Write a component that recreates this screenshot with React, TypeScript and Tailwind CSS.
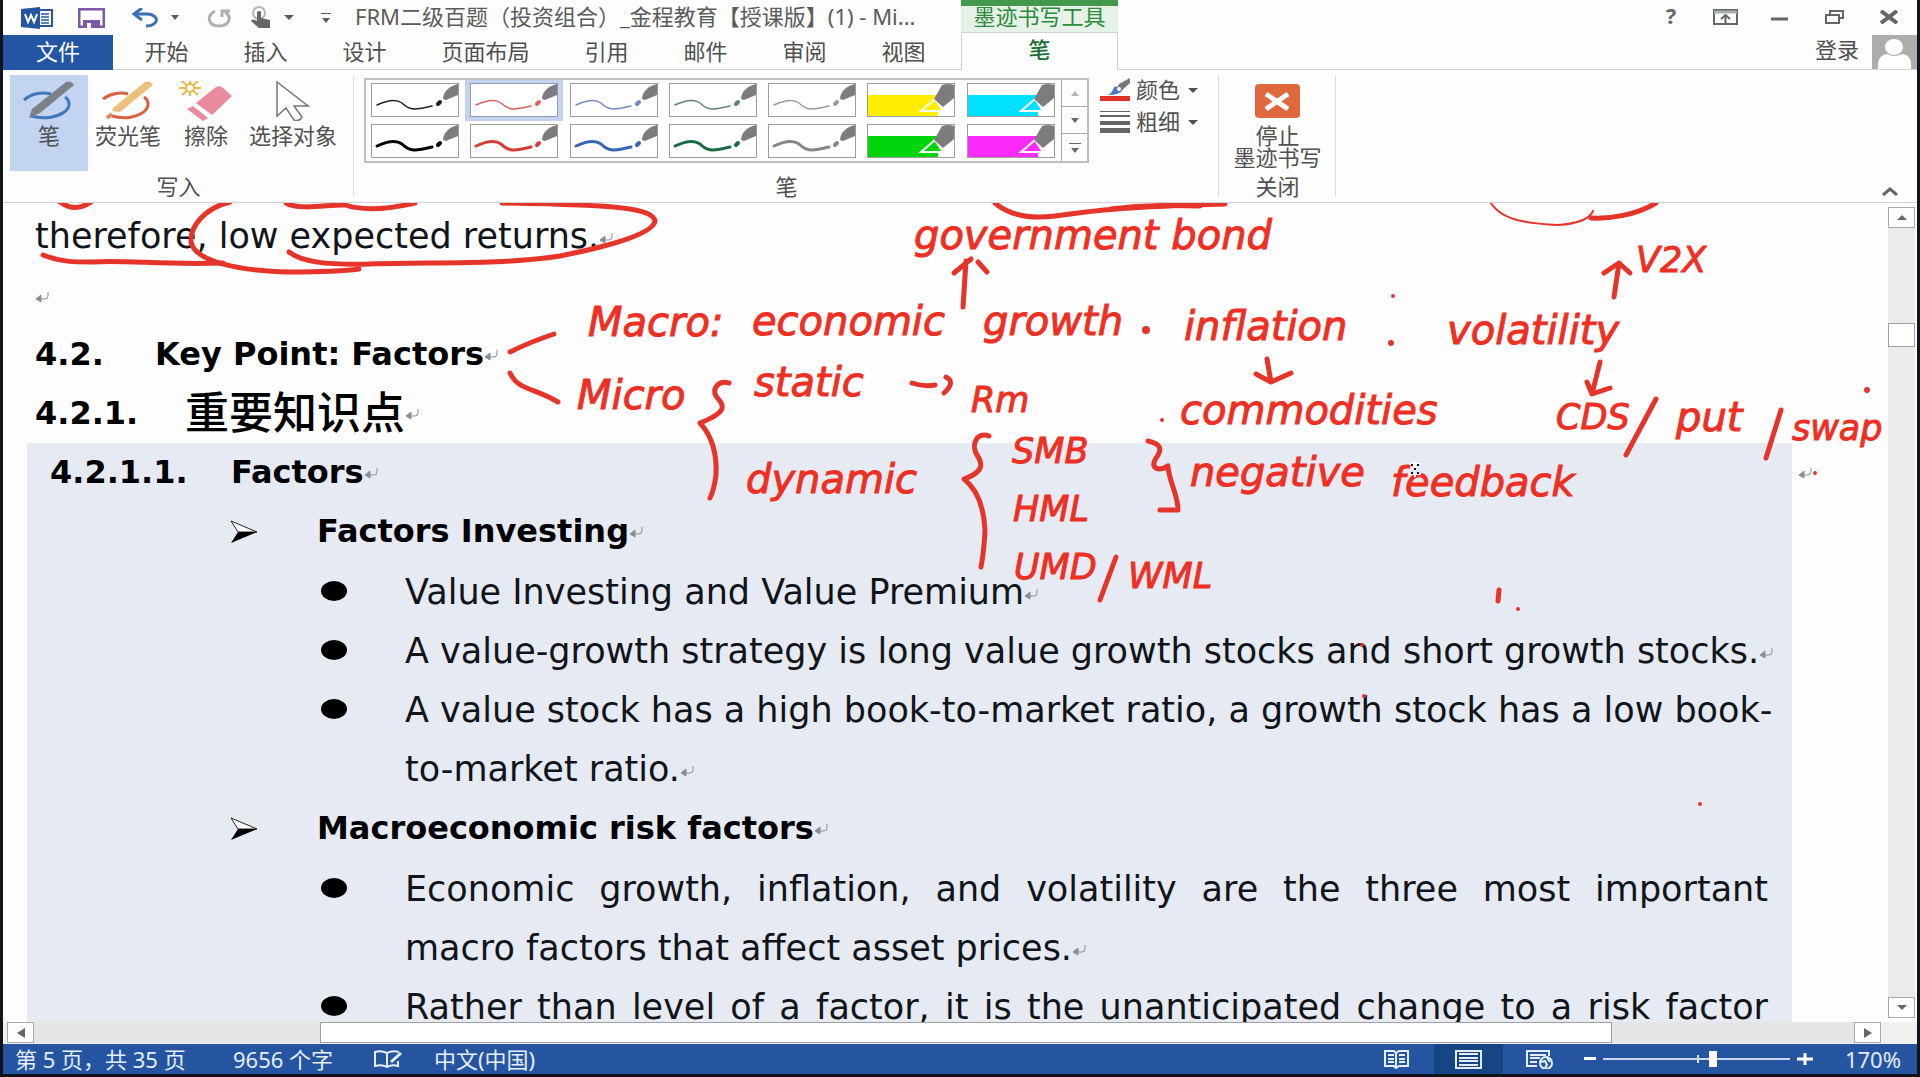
/* WordInk — Word window with the ink tools tab open over a study note */

import type { ReactNode } from 'react'

const TABS = [
  { label: '开始' }, { label: '插入' }, { label: '设计' }, { label: '页面布局', wide: true },
  { label: '引用' }, { label: '邮件' }, { label: '审阅' }, { label: '视图' },
]

interface Pen {
  name: string
  color: string
  width: number
  marker?: boolean
  active?: boolean
}

const PENS: Pen[] = [
  { name: '黑色细笔', color: '#222222', width: 1.5 },
  { name: '红色细笔', color: '#e0605c', width: 1.5, active: true },
  { name: '蓝色细笔', color: '#7388cc', width: 1.5 },
  { name: '绿色细笔', color: '#5a8573', width: 1.5 },
  { name: '灰色细笔', color: '#9a9a9a', width: 1.5 },
  { name: '黄色荧光笔', color: '#ffee00', width: 0, marker: true },
  { name: '青色荧光笔', color: '#00e0ff', width: 0, marker: true },
  { name: '黑色粗笔', color: '#000000', width: 3 },
  { name: '红色粗笔', color: '#d93a32', width: 3 },
  { name: '蓝色粗笔', color: '#3566b4', width: 3 },
  { name: '绿色粗笔', color: '#1d6b45', width: 3 },
  { name: '灰色粗笔', color: '#868686', width: 3 },
  { name: '绿色荧光笔', color: '#00d40a', width: 0, marker: true },
  { name: '洋红荧光笔', color: '#fb2bfb', width: 0, marker: true },
]

const SECTIONS = [
  {
    title: 'Factors Investing',
    items: [
      ['Value Investing and Value Premium'],
      ['A value-growth strategy is long value growth stocks and short growth stocks.'],
      ['A value stock has a high book-to-market ratio, a growth stock has a low book-', 'to-market ratio.'],
    ],
  },
  {
    title: 'Macroeconomic risk factors',
    items: [
      ['Economic growth, inflation, and volatility are the three most important', 'macro factors that affect asset prices.'],
      ['Rather than level of a factor, it is the unanticipated change to a risk factor', ''],
    ],
  },
]

// Handwritten notes: position of each word on the ink canvas
const NOTES = [
  { t: 'government bond', x: 914, y: 249 },
  { t: 'Macro:', x: 588, y: 336 },
  { t: 'economic', x: 752, y: 335 },
  { t: 'growth', x: 983, y: 335 },
  { t: 'inflation', x: 1184, y: 340 },
  { t: 'volatility', x: 1447, y: 344 },
  { t: 'Micro', x: 577, y: 409 },
  { t: 'static', x: 754, y: 396 },
  { t: 'commodities', x: 1180, y: 424 },
  { t: 'put', x: 1676, y: 431 },
  { t: 'dynamic', x: 746, y: 493 },
  { t: 'negative', x: 1190, y: 486 },
  { t: 'feedback', x: 1391, y: 496 },
]

const SHORT_NOTES = [
  { t: 'V2X', x: 1636, y: 272 },
  { t: 'Rm', x: 971, y: 412 },
  { t: 'CDS', x: 1556, y: 429 },
  { t: 'swap', x: 1792, y: 440 },
  { t: 'SMB', x: 1012, y: 463 },
  { t: 'HML', x: 1013, y: 521 },
  { t: 'UMD', x: 1014, y: 579 },
  { t: 'WML', x: 1128, y: 588 },
]

const STROKES = [
  'M230 202C205 208 190 226 191 242C195 262 240 271 290 272C320 272 345 271 359 269',
  'M43 255C60 262 75 262 92 262C130 260 160 265 223 263',
  'M289 252C302 262 325 265 370 264C440 262 500 265 560 256C610 246 653 234 655 221C652 208 620 205 502 203',
  'M60 202Q75 213 91 202',
  'M286 203C300 211 330 204 345 205C360 210 380 211 415 203',
  'M510 352Q530 342 554 334',
  'M510 373C518 390 532 387 558 402',
  'M995 203C1010 216 1030 219 1055 216C1085 212 1110 207 1225 204',
  'M1111 209Q1150 204 1200 206',
  'M963 307L966 261M954 273L971 259M978 262L987 272',
  'M729 383C718 380 712 389 716 396C722 404 732 410 700 423C712 436 717 455 716 475Q714 490 710 498',
  'M989 436C976 431 971 446 977 455C983 464 984 472 964 479C978 490 984 510 985 530Q984 552 981 567',
  'M1148 441C1162 444 1162 450 1156 458C1150 468 1158 472 1168 466C1169 482 1178 494 1178 510L1160 510',
  'M912 383Q924 387 935 385M946 377Q956 382 944 393',
  'M1116 557L1100 600',
  'M1591 218C1610 219 1636 215 1656 203',
  'M1614 297L1619 263M1604 273L1619 263L1630 273',
  'M1267 359L1271 382M1256 374L1271 382L1291 373',
  'M1600 362L1592 394M1587 382L1592 394L1610 388',
  'M1656 399L1626 455',
  'M1781 410L1766 458',
  'M1499 590L1498 601',
]

const DOTS = [
  [1162, 420, 2], [1146, 330, 4], [1393, 296, 2], [1391, 343, 3], [1867, 390, 3], [1815, 473, 2],
  [1518, 609, 2], [1362, 645, 2], [1364, 696, 2], [1700, 804, 2],
]

function Caret({ up, small }: { up?: boolean; small?: boolean }) {
  return (
    <svg width={small ? 8 : 10} height="5" viewBox="0 0 10 6" preserveAspectRatio="none" fill="currentColor" className="shrink-0">
      <path d={up ? 'M0 6L5 0L10 6Z' : 'M0 0L5 6L10 0Z'} />
    </svg>
  )
}

function Mark() {
  return (
    <svg width="14" height="12" viewBox="0 0 14 12" fill="none" stroke="#8a8f96" strokeWidth="1" className="inline-block">
      <path d="M13 1V5Q13 8 10 8H2" />
      <path d="M6 4L1 8L6 11Z" fill="#8a8f96" />
    </svg>
  )
}

function PenThumb({ pen }: { pen: Pen }) {
  if (pen.marker) {
    return (
      <svg width="86" height="32" viewBox="0 0 86 32">
        <rect y="11" width="70" height="21" fill={pen.color} />
        <path d="M53 27L67 15L75 27Z" fill={pen.color} stroke="#fff" strokeWidth="2" />
        <path d="M66 15L74 1Q80 -1 86 1V14L75 23Z" fill="#7c7c7c" />
      </svg>
    )
  }
  return (
    <svg width="86" height="32" viewBox="0 0 86 32" fill="none">
      <path d="M5 21Q22 13 30 19C38 27 44 26 60 22" stroke={pen.color} strokeWidth={pen.width} strokeLinecap="round" />
      <path d="M66 20L68 18" stroke={pen.color} strokeWidth="4" strokeLinecap="round" />
      <path d="M71 15C71 8 77 2 86 0V11L74 16Z" fill="#7c7c7c" />
    </svg>
  )
}

function TitleBar() {
  return (
    <div className="flex h-[35px] items-center pl-[18px] text-[#5b5b5b]">
      <svg width="32" height="22" viewBox="0 0 32 22">
        <rect x="17" y="3" width="14" height="16" fill="#fff" stroke="#2b579a" strokeWidth="2" />
        <path d="M20 7H28M20 10H28M20 13H28M20 16H28" stroke="#2b579a" strokeWidth="1.5" />
        <path d="M0 2L19 0V22L0 20Z" fill="#2355a3" />
        <path d="M4 7L7 15L10 8L13 15L16 7" fill="none" stroke="#fff" strokeWidth="2" />
      </svg>
      <button aria-label="保存" className="ml-[25px]">
        <svg width="27" height="20" viewBox="0 0 27 20">
          <path d="M1 1H26V19H1Z" fill="#fff" stroke="#7d57a8" strokeWidth="3" />
          <rect x="5" y="12" width="17" height="8" fill="#7d57a8" />
          <rect x="9" y="15" width="4" height="5" fill="#fff" />
        </svg>
      </button>
      <button aria-label="撤消" className="ml-[26px] flex items-center gap-3">
        <svg width="28" height="20" viewBox="0 0 28 20" fill="none" stroke="#3b6fb6" strokeWidth="3">
          <path d="M4 6H17C29 7 28 18 15 18" />
          <path d="M11 0L3 6L11 12" />
        </svg>
        <Caret small />
      </button>
      <button aria-label="重复" className="ml-[28px] text-[#b0b0b0]">
        <svg width="25" height="20" viewBox="0 0 25 20" fill="none" stroke="currentColor" strokeWidth="3">
          <path d="M8 3C-1 8 1 18 12 18C23 18 25 8 18 4" />
          <path d="M15 9V3H23" />
        </svg>
      </button>
      <button aria-label="触摸/鼠标模式" className="ml-[18px] flex items-center gap-3">
        <svg width="22" height="23" viewBox="0 0 22 23">
          <circle cx="9" cy="7" r="6" fill="none" stroke="#a9b6c8" strokeWidth="2" />
          <path d="M7 6Q9 4 11 6V12L20 14V22H9L1 15Q2 12 7 15Z" fill="#666" />
        </svg>
        <Caret />
      </button>
      <button aria-label="自定义快速访问工具栏" className="ml-[27px] flex flex-col items-center gap-1">
        <span className="h-px w-2.5 bg-current" />
        <Caret small />
      </button>
      <h1 className="ml-6 flex-1 truncate pb-0.5">
        FRM二级百题（投资组合）_金程教育【授课版】(1) - Mi...
      </h1>
    </div>
  )
}

function Header() {
  return (
    <header className="flex h-[70px] shrink-0 text-[22px] text-[#4f4f4f]">
      <div className="flex flex-col">
        <div className="grid"><TitleBar /></div>
        <nav className="flex h-[35px] border-b border-[#d2d2d2] pr-2">
          <button className="-mb-px mr-1 w-[110px] bg-[#2355a3] pb-1 text-white">文件</button>
          {TABS.map(t => (
            <button key={t.label} className={t.wide ? 'w-[143px] pb-1' : 'w-[99px] pb-1'}>{t.label}</button>
          ))}
        </nav>
      </div>
      <div className="flex w-[157px] flex-col text-center text-[#2c8a3c]">
        <div className="h-[35px] border-t-[6px] border-[#43984b] bg-[#e6f1e8] leading-5">墨迹书写工具</div>
        <button className="flex-1 border-x border-t border-[#d2d2d2] pb-1 font-medium text-[#1f6f35]">笔</button>
      </div>
      <div className="flex flex-1 flex-col items-end border-b border-[#d2d2d2]">
        <div className="flex h-[34px] items-center pr-[18px] text-[#666]">
          <button aria-label="帮助" className="w-5 pb-1 font-bold">?</button>
          <button aria-label="功能区显示选项" className="ml-8">
            <svg width="25" height="16" viewBox="0 0 25 16" fill="none" stroke="currentColor" strokeWidth="2">
              <rect x="1" y="1" width="23" height="14" /><path d="M1 3H24" stroke="#a8b0ae" strokeWidth="3" />
              <path d="M12.500 14V7M8 10L12.500 6L17 10" />
            </svg>
          </button>
          <button aria-label="最小化" className="ml-[33px]">
            <svg width="17" height="16" stroke="currentColor" strokeWidth="3"><path d="M0 10H17" /></svg>
          </button>
          <button aria-label="向下还原" className="ml-[37px]">
            <svg width="20" height="16" viewBox="0 0 20 16" fill="none" stroke="currentColor" strokeWidth="2">
              <rect x="1" y="6" width="13" height="8" /><path d="M5 5V2H18V9H15" />
            </svg>
          </button>
          <button aria-label="关闭" className="ml-[34px]">
            <svg width="20" height="14" viewBox="0 0 20 14" stroke="currentColor" strokeWidth="4"><path d="M2 1L18 13M18 1L2 13" /></svg>
          </button>
        </div>
        <a href="#login" className="flex h-[35px] items-center gap-[13px] whitespace-nowrap">
          <span className="pb-1">登录</span>
          <svg width="45" height="34" viewBox="0 0 45 34" className="bg-[#adadad]" fill="#fff">
            <ellipse cx="22" cy="12" rx="9" ry="8" /><path d="M6 34C5 24 9 20 15 19Q22 23 30 19C37 20 40 24 39 34Z" />
          </svg>
        </a>
      </div>
    </header>
  )
}

function Group({ label, className, children }: { label: string; className: string; children: ReactNode }) {
  return (
    <section className={`relative flex flex-col ${className}`}>
      <div className="flex h-[101px]">{children}</div>
      <h2 className="text-center leading-[30px]">{label}</h2>
      <div className="absolute right-0 top-1.5 h-[120px] w-px bg-[#dcdcdc]" />
    </section>
  )
}

function Ribbon() {
  return (
    <div className="flex h-[133px] shrink-0 border-b border-[#d2d2d2] text-[22px] text-[#505050]">
      <Group label="写入" className="w-[351px]">
        <div className="flex pl-[7px] pt-[5px]">
          <button className="flex h-24 w-[78px] flex-col items-center bg-[#c2d4f0] pt-1.5">
            <svg width="54" height="40" viewBox="0 0 54 40" fill="none">
              <path d="M2 19C10 12 20 11 29 13M43 16C56 26 36 42 9 35" stroke="#3f78bd" strokeWidth="3" />
              <path d="M10 28L44 1Q49 -1 52 4L18 32L7 37Z" fill="#7b8088" />
            </svg>
            <span className="leading-7">笔</span>
          </button>
          <button className="flex h-24 w-[80px] flex-col items-center whitespace-nowrap pt-1.5">
            <svg width="54" height="40" viewBox="0 0 54 40" fill="none">
              <path d="M2 18C10 12 20 11 27 13M43 16C56 26 36 42 11 35" stroke="#d8623f" strokeWidth="3" />
              <path d="M12 27L44 1Q49 -1 52 4L19 31L11 30Z" fill="#e9c07c" />
              <path d="M6 37L11 33" stroke="#e58a60" strokeWidth="4" />
            </svg>
            <span className="leading-7">荧光笔</span>
          </button>
          <button className="flex h-24 w-[76px] flex-col items-center pt-1.5">
            <svg width="54" height="40" viewBox="0 0 54 40">
              <path d="M11 -1V15M0 7H22M3 0L19 14M19 0L3 14" stroke="#eeb64f" strokeWidth="2" />
              <circle cx="11" cy="7" r="4" fill="#fff" stroke="#eeb64f" strokeWidth="2" />
              <path d="M17 22L37 6Q41 4 44 7L53 15L33 34Z" fill="#ea8a9e" />
              <path d="M14 25L29 37L24 40L8 28Z" fill="#ea8a9e" />
            </svg>
            <span className="leading-7">擦除</span>
          </button>
          <button className="flex h-24 w-[98px] flex-col items-center pt-1.5">
            <svg width="34" height="40" viewBox="0 0 34 40" fill="#fff" stroke="#777" strokeWidth="1.5">
              <path d="M1 1V35L10 27L18 39Q23 41 26 36L18 25H32Z" />
            </svg>
            <span className="whitespace-nowrap leading-7">选择对象</span>
          </button>
        </div>
      </Group>

      <Group label="笔" className="w-[865px]">
        <div className="ml-2.5 mt-2 flex h-[85px] border-2 border-[#bcbec2]">
          <div className="grid w-[695px] grid-cols-7">
            {PENS.map(p => (
              <button
                key={p.name}
                aria-label={p.name}
                className={p.active
                  ? 'flex w-[98px] items-center justify-center bg-[#c5d2ec]'
                  : 'flex w-[98px] items-center justify-center'}
              >
                <span className={p.active ? 'border border-[#8c9cc4] bg-white' : 'border border-[#9c9c9c] bg-white'}>
                  <PenThumb pen={p} />
                </span>
              </button>
            ))}
          </div>
          <div className="grid w-[26px] grid-rows-3 divide-y divide-[#a8a8a8] border-l border-[#a8a8a8] text-[#666]">
            <button aria-label="上一行" className="flex items-center justify-center text-[#b5b5b5]"><Caret up small /></button>
            <button aria-label="下一行" className="flex items-center justify-center"><Caret small /></button>
            <button aria-label="其他" className="flex flex-col items-center justify-center gap-1">
              <span className="h-px w-3 bg-current" /><Caret small />
            </button>
          </div>
        </div>
        <div className="ml-[11px] flex flex-col pt-1">
          <button className="flex h-8 items-center">
            <svg width="30" height="24" viewBox="0 0 30 24">
              <path d="M30 0L19 6L15 13L20 14L30 5Z" fill="#777" />
              <path d="M7 17Q12 16 14 9Q19 7 22 12Q21 17 7 17Z" fill="#4b79bd" />
              <circle cx="19" cy="11" r="2" fill="#fff" />
              <rect y="18" width="30" height="5" fill="#e2302b" />
            </svg>
            <span className="ml-1.5 mr-2 pb-0.5">颜色</span><Caret />
          </button>
          <button className="flex h-8 items-center">
            <svg width="30" height="24" viewBox="0 0 30 24" fill="#666">
              <rect y="1" width="30" height="1" /><rect y="5" width="30" height="2" />
              <rect y="11" width="30" height="4" /><rect y="18" width="30" height="5" />
            </svg>
            <span className="ml-1.5 mr-2 pb-0.5">粗细</span><Caret />
          </button>
        </div>
      </Group>

      <Group label="关闭" className="w-[117px]">
        <button className="flex w-full flex-col items-center whitespace-nowrap pt-3.5 leading-[22px]">
          <svg width="45" height="34" viewBox="0 0 45 34">
            <rect width="45" height="34" rx="4" fill="#e0683f" />
            <path d="M11 10L33 25M33 10L11 25" stroke="#fff" strokeWidth="5" />
          </svg>
          <span className="mt-1.5">停止</span>
          <span>墨迹书写</span>
        </button>
      </Group>

      <div className="flex flex-1 items-end justify-end pb-1.5 pr-[18px]">
        <button aria-label="折叠功能区">
          <svg width="18" height="10" viewBox="0 0 18 10" fill="none" stroke="#666" strokeWidth="3"><path d="M2 9L9 3L16 9" /></svg>
        </button>
      </div>
    </div>
  )
}

function InkLayer() {
  return (
    <svg className="pointer-events-none absolute left-0 top-0" width="1885" height="819" viewBox="3 203 1885 819" fill="none">
      <g stroke="#e5352b" strokeWidth="5" strokeLinecap="round" strokeLinejoin="round">
        {STROKES.map(d => <path key={d} d={d} />)}
        <path d="M1490 202C1500 217 1515 223 1558 225Q1588 223 1593 211" strokeWidth="2" />
      </g>
      <g fill="#e5352b">
        {DOTS.map(([x, y, r]) => <circle key={`${x}-${y}`} cx={x} cy={y} r={r} />)}
      </g>
      <g className="fill-[#ee3024] stroke-[#ee3024] font-['DejaVu_Sans',sans-serif] text-[40px] italic" strokeWidth="1">
        {NOTES.map(n => <text key={n.t} x={n.x} y={n.y}>{n.t}</text>)}
      </g>
      <g className="fill-[#ee3024] stroke-[#ee3024] font-['DejaVu_Sans',sans-serif] text-[35px] italic" strokeWidth="1">
        {SHORT_NOTES.map(n => <text key={n.t} x={n.x} y={n.y}>{n.t}</text>)}
      </g>
      {/* pen cursor */}
      <path d="M1409 464H1421M1409 474H1421M1415 461V477" stroke="#fff" strokeWidth="2" />
      <path d="M1411 465H1413M1417 465H1419M1411 473H1413M1417 473H1419M1414 469H1416" stroke="#111" strokeWidth="2" />
    </svg>
  )
}

function Page() {
  return (
    <main className="relative min-w-0 flex-1 overflow-hidden pt-1 font-['DejaVu_Sans','Noto_Sans_CJK_SC',sans-serif] text-[35px] leading-[59px] text-[#111418]">
      <p className="whitespace-nowrap pl-8">therefore, low expected returns.<Mark /></p>
      <p className="pl-8"><Mark /></p>
      <h2 className="flex items-center pl-8 text-[32px] font-bold text-black">
        <span className="w-[120px]">4.2.</span>Key Point: Factors<Mark />
      </h2>
      <h3 className="flex items-center pl-8 text-[32px] font-bold text-black">
        <span className="w-[150px]">4.2.1.</span><span className="text-[44px] font-medium">重要知识点</span><Mark />
      </h3>
      <div className="ml-6 mr-24 h-full bg-[#e5eaf3] pl-[23px] pr-6">
        <h4 className="flex items-center text-[32px] font-bold text-black">
          <span className="w-[181px]">4.2.1.1.</span>Factors<Mark />
        </h4>
        {SECTIONS.map(s => (
          <section key={s.title} className="pl-[180px]">
            <h5 className="flex items-center text-[32px] font-bold text-black">
              <svg width="28" height="24" viewBox="0 0 28 24" className="mr-[59px]">
                <path d="M1 1L27 12L8 12Z" fill="#fff" stroke="#222" strokeWidth="1" />
                <path d="M1 23L27 12L8 12Z" fill="#000" />
              </svg>
              {s.title}<Mark />
            </h5>
            <ul className="pl-[91px] pt-0.5">
              {s.items.map(lines => (
                <li key={lines[0]} className="flex">
                  <span className="mr-[58px] mt-[18px] h-5 w-[26px] shrink-0 rounded-[50%] bg-black" />
                  <p className="min-w-0 flex-1">
                    {lines.map((l, i) => i < lines.length - 1
                      ? <span key={i} className="block whitespace-nowrap [text-align-last:justify]">{l}</span>
                      : l && <span key={i} className="block whitespace-nowrap">{l}<Mark /></span>)}
                  </p>
                </li>
              ))}
            </ul>
          </section>
        ))}
      </div>
      <div className="absolute right-[76px] top-[258px] flex h-6 items-center"><Mark /></div>
      <InkLayer />
    </main>
  )
}

function StatusBar() {
  return (
    <footer className="flex h-[30px] shrink-0 items-center bg-[#2555a0] pl-3 pr-4 text-[22px] leading-7 text-[#e4edf8]">
      <span className="w-[218px] whitespace-nowrap">第 5 页，共 35 页</span>
      <span className="w-[141px]">9656 个字</span>
      <button aria-label="校对" className="w-[60px]">
        <svg width="29" height="18" viewBox="0 0 29 18" fill="none" stroke="currentColor" strokeWidth="2">
          <path d="M13 3Q7 0 1 2V16Q8 14 13 17V3Q18 0 25 2M13 17Q18 14 24 16V11" />
          <path d="M17 12L27 3" strokeWidth="3" />
        </svg>
      </button>
      <span>中文(中国)</span>
      <div className="ml-auto flex h-full items-center">
        <button aria-label="阅读视图" className="flex h-full w-[50px] items-center justify-start">
          <svg width="25" height="19" viewBox="0 0 25 19" fill="none" stroke="currentColor" strokeWidth="2">
            <path d="M1 1H10L12 3L15 1H24V16H15L12 18L10 16H1Z" /><path d="M12 3V18M4 5H10M4 9H10M4 12H10M15 5H21M15 9H21M15 12H21" />
          </svg>
        </button>
        <button aria-label="页面视图" className="flex h-full w-[69px] items-center justify-center bg-[#164586]">
          <svg width="27" height="19" viewBox="0 0 27 19" fill="none" stroke="currentColor" strokeWidth="2">
            <rect x="1" y="1" width="25" height="17" /><path d="M4 4H23M4 8H23M4 11H23M4 15H23" />
          </svg>
        </button>
        <button aria-label="Web 版式视图" className="flex h-full w-[81px] items-center pl-[23px]">
          <svg width="28" height="19" viewBox="0 0 28 19" fill="none" stroke="currentColor" strokeWidth="2">
            <path d="M11 16H1V1H23V6M4 5H20M4 8H14M4 12H11" /><circle cx="20" cy="13" r="6" fill="#2555a0" />
            <path d="M15 12L19 11L21 15L19 18M21 8L24 12" />
          </svg>
        </button>
        <button aria-label="缩小"><svg width="12" height="4" fill="#fff"><rect width="12" height="3" /></svg></button>
        <div className="relative mx-[7px] flex h-full w-[187px] items-center">
          <div className="absolute left-[94px] top-[11px] h-2 w-0.5 bg-[#dfe8f5]" />
          <input
            type="range" min={0} max={100} defaultValue={59} aria-label="显示比例"
            className="relative h-4 w-full appearance-none bg-transparent bg-[linear-gradient(#c9d8ee,#c9d8ee)] bg-[length:100%_2px] bg-center bg-no-repeat [&::-webkit-slider-thumb]:h-4 [&::-webkit-slider-thumb]:w-2 [&::-webkit-slider-thumb]:appearance-none [&::-webkit-slider-thumb]:bg-white"
          />
        </div>
        <button aria-label="放大"><svg width="16" height="12" stroke="#fff" strokeWidth="3"><path d="M0 6H16M8 0V12" /></svg></button>
        <span className="w-[88px] text-right">170%</span>
      </div>
    </footer>
  )
}

export default function App() {
  return (
    <div className="flex h-screen flex-col overflow-hidden bg-[#10151c] px-[3px] pb-[3px] font-['Noto_Sans','Noto_Sans_CJK_SC',sans-serif]">
      <div className="flex min-h-0 flex-1 flex-col bg-[#fdfdfd]">
        <Header />
        <Ribbon />
        <div className="flex min-h-0 flex-1">
          <Page />
          <div className="flex w-[29px] flex-col bg-[#fdfdfd] pb-1 pr-0.5 pt-1 text-[#666]">
            <button aria-label="向上滚动" className="flex h-[21px] items-center justify-center border border-[#a9a9a9] bg-white"><Caret up /></button>
            <div className="flex-1 bg-[#ebebeb] pt-[95px]">
              <div className="h-6 border border-[#a0a0a0] bg-white" />
            </div>
            <button aria-label="向下滚动" className="flex h-[21px] items-center justify-center border border-[#a9a9a9] bg-white"><Caret /></button>
          </div>
        </div>
        <div className="flex h-[22px] shrink-0 bg-[#f0f0f0] pb-px pl-1 pr-9 text-[#666]">
          <button aria-label="向左滚动" className="flex w-[27px] items-center justify-center border border-[#a9a9a9] bg-white">
            <svg width="8" height="10" fill="currentColor"><path d="M8 0L0 5L8 10Z" /></svg>
          </button>
          <div className="flex flex-1 bg-[#e7e6e7]">
            <div className="ml-[286px] mr-[242px] flex-1 border border-[#a0a0a0] bg-white" />
          </div>
          <button aria-label="向右滚动" className="flex w-[27px] items-center justify-center border border-[#a9a9a9] bg-white">
            <svg width="8" height="10" fill="currentColor"><path d="M0 0L8 5L0 10Z" /></svg>
          </button>
        </div>
        <StatusBar />
      </div>
    </div>
  )
}
